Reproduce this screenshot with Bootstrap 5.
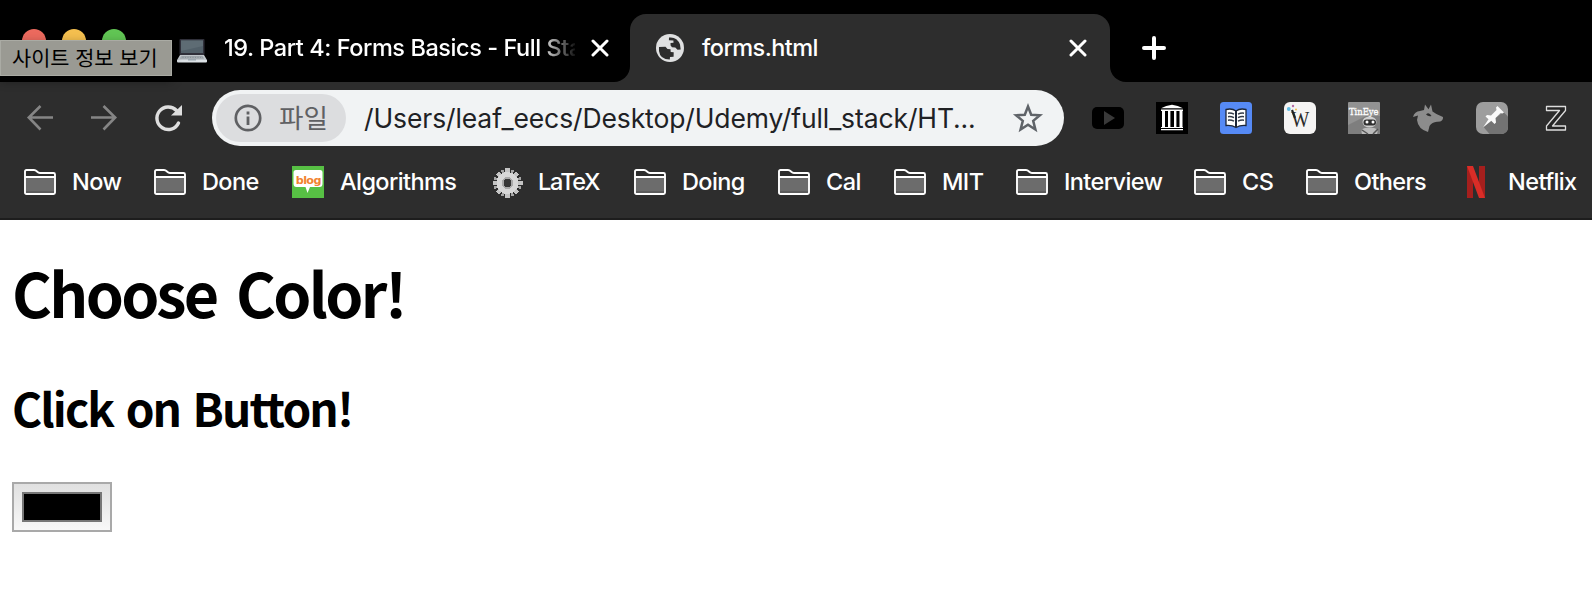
<!DOCTYPE html>
<html lang="ko">
<head>
<meta charset="utf-8">
<meta name="viewport" content="width=device-width, initial-scale=1">
<title>forms.html</title>
<link href="https://cdn.jsdelivr.net/npm/bootstrap@5.3.0/dist/css/bootstrap.min.css" rel="stylesheet">
<style>
body{font-family:Inter,"Noto Sans CJK KR",sans-serif;background:#fff;overflow:hidden}
svg{display:block;flex:none}
.chrome{background:#2d2d2d;color:#fff}
.topgap{height:14px;background:#000}
.tabrow{height:68px;font-size:23.5px;font-weight:500;line-height:68px;white-space:nowrap}
.tab-idle{width:630px;background:#000;border-bottom-right-radius:16px;padding-left:177px}
.tab-live-wrap{width:480px;background:#000}
.tab-live{height:68px;background:#2d2d2d;border-radius:16px 16px 0 0;padding-left:26px}
.tab-rest{background:#000;border-bottom-left-radius:16px;padding-left:32px}
.tab-title{width:351px;margin-left:17px;letter-spacing:-.44px;-webkit-mask-image:linear-gradient(90deg,#000 315px,transparent 354px);mask-image:linear-gradient(90deg,#000 315px,transparent 354px)}
.live-title{width:361px;margin-left:18px;letter-spacing:-.55px}
.toolrow{height:72px;padding-left:24px}
.omni{width:852px;height:56px;margin-left:27px;border-radius:28px;background:#f1f3f4;color:#202124;font-size:26.5px;padding:4px}
.chip{width:130px;height:48px;border-radius:24px;background:#dcdddf;color:#5f6063;padding-left:18px;font-family:"Noto Sans CJK KR",sans-serif;font-size:26.6px}
.chip span{margin-left:17px;padding-bottom:2px}
.url{width:629px;margin-left:18px;padding-top:1px;white-space:nowrap;letter-spacing:-.11px}
.exts{gap:32px;margin-left:28px}
.marks{height:66px;padding:0 0 9px 24px;border-bottom:2px solid #1d1d1d;display:grid;grid-template-columns:130px 138px 200px 142px 144px 116px 122px 178px 112px 154px 132px;align-items:center;font-size:23.5px;font-weight:500;letter-spacing:-.6px;line-height:30px;white-space:nowrap}
.marks>div{display:flex;align-items:center;gap:16px}
.marks .tight{letter-spacing:-1.4px;margin-left:-2px}
.tip{left:0;top:40px;width:172px;height:36px;background:#9a9a93;border:1px solid #aaaba4;color:#000;font-family:"Noto Sans CJK KR",sans-serif;font-size:20.8px;line-height:32px;padding-left:11px;white-space:nowrap;box-shadow:0 4px 10px #0006}
.light{top:29px;width:24px;height:24px;border-radius:50%}
.page{padding:34px 12px;font-family:"Noto Sans CJK KR",sans-serif;color:#000}
.page h1{font-size:61px;font-weight:700;line-height:76px;margin:0;letter-spacing:-2.7px;word-spacing:5px}
.page h2{font-size:46px;font-weight:700;line-height:60px;margin:47px 0 45px;letter-spacing:-1.9px;word-spacing:1.500px;font-variant-ligatures:none}
.picker{display:block;width:100px;height:50px;border:2px solid #a9a9a9;border-radius:0;background:linear-gradient(#e0e0e0,#f8f8f8);padding:8px;appearance:none;-webkit-appearance:none}
.picker::-webkit-color-swatch-wrapper{padding:0}
.picker::-webkit-color-swatch{border:2px solid #777;border-radius:0}
</style>
</head>
<body>
<svg width="0" height="0" class="position-absolute"><defs>
<symbol id="folder" viewBox="0 0 32 26"><path d="M1 8V3q0-2 2-2h9.500l3.500 3.500h13q2 0 2 2V23q0 2-2 2H3q-2 0-2-2z" fill="#2d2d2d"/><path d="M2 9h28v15H2z" fill="#6c6c6c"/><path d="M2 22h28v2H2z" fill="#5c5c5c"/><path d="M1 8h30M1 8V2.500Q1 1 2.500 1H10q1.500 0 3 1.500T16 4H29.500Q31 4 31 5.500V23.500Q31 25 29.500 25H2.500Q1 25 1 23.500z" fill="none" stroke="#fff" stroke-width="1.900"/></symbol>
<symbol id="cross" viewBox="0 0 18 18"><path d="M2 2l14 14M16 2L2 16" stroke="#fff" stroke-width="3" stroke-linecap="round"/></symbol>
</defs></svg>

<header class="chrome position-relative">
  <div class="topgap"></div>
  <div class="tabrow d-flex">
    <div class="tab-idle d-flex align-items-center">
      <svg width="30" height="24" viewBox="0 0 30 24" style="margin-top:6px"><rect x="2.500" width="25" height="16" rx="1" fill="#30303a"/><path d="M4 1.500h22V14H4z" fill="#526069"/><path d="M4 1.500h22V7L4 12z" fill="#5e6c74"/><path d="M3 16h24l3 5H0z" fill="#c0c6cb"/><path d="M4.500 17.200h21l1.500 2.300H3z" fill="#8c949a"/><path d="M4 18.300h22" stroke="#c0c6cb" stroke-width=".6" stroke-dasharray="1.500 1"/><path d="M0 21h30v1.500q0 1-1 1H1q-1 0-1-1z" fill="#dce1e5"/><path d="M11 20h8v1.500h-8z" fill="#9da8b0"/></svg>
      <div class="tab-title">19. Part 4: Forms Basics - Full Sta</div>
      <svg width="18" height="18" style="margin-left:16px"><use href="#cross"/></svg>
    </div>
    <div class="tab-live-wrap">
      <div class="tab-live d-flex align-items-center">
        <svg width="28" height="28" viewBox="0 0 28 28"><circle cx="14" cy="14" r="14" fill="#dfe0e1"/><path d="M3 13l6.500-.3 2 2.300 3 .3.200 2.700 3 .2-.1 4.600-3.600.3-.2 2.500Q4 25.500 3 17zM13 3.500q8-1 11 7l.7 5-3.200.3-2.200-2.300-3.300-.2-1.400-1.700-.1-2.600 3-.3-.1-2.300-4.500-.2z" fill="#2d2d2d"/></svg>
        <div class="live-title">forms.html</div>
        <svg width="18" height="18" style="margin-left:6px"><use href="#cross"/></svg>
      </div>
    </div>
    <div class="tab-rest flex-fill d-flex align-items-center">
      <svg width="24" height="24" viewBox="0 0 24 24"><path d="M12 2v20M2 12h20" stroke="#fff" stroke-width="4" stroke-linecap="round"/></svg>
    </div>
  </div>

  <div class="toolrow d-flex align-items-center">
    <svg width="32" height="32" viewBox="0 0 32 32" fill="none" stroke="#858585" stroke-width="2.600"><path d="M29 15.500H5M16.500 4L4.800 15.500 16.500 27.500"/></svg>
    <svg width="32" height="32" viewBox="0 0 32 32" fill="none" stroke="#858585" stroke-width="2.600" style="margin-left:32px"><path d="M3 15.500h24M15.500 4l11.700 11.500L15.500 27.500"/></svg>
    <svg width="32" height="32" viewBox="0 0 32 32" style="margin-left:33px"><path d="M25.500 21A11.300 11.300 0 1 1 23.500 8.500" fill="none" stroke="#dedede" stroke-width="3.400" stroke-linecap="round"/><path d="M29 3v10.500H18z" fill="#dedede"/></svg>
    <div class="omni d-flex align-items-center">
      <div class="chip d-flex align-items-center">
        <svg width="28" height="28" viewBox="0 0 28 28"><circle cx="14" cy="14" r="12.200" fill="none" stroke="#5f6063" stroke-width="2.700"/><path d="M12.600 12.500h2.800V21h-2.800zM12.600 7.500h2.800v2.900h-2.800z" fill="#5f6063"/></svg>
        <span>파일</span>
      </div>
      <div class="url">/Users/leaf_eecs/Desktop/Udemy/full_stack/HT...</div>
      <svg width="32" height="32" viewBox="0 0 32 32" style="margin-left:19px"><path d="M16 4.500l3.200 8.200 8.700.6-6.700 5.600 2.200 8.600-7.400-4.700-7.400 4.700 2.200-8.600-6.700-5.600 8.700-.6z" fill="none" stroke="#5f6368" stroke-width="2.500"/></svg>
    </div>
    <div class="exts d-flex align-items-center">
      <svg width="32" height="32" viewBox="0 0 32 32"><rect y="5" width="32" height="22" rx="5" fill="#000"/><path d="M12 9v14l11-7z" fill="#393939"/></svg>
      <svg width="32" height="32" viewBox="0 0 32 32"><path d="M0 0h32v32H0z"/><path d="M5 6.200q5-2.700 11-3.400 6 .7 11 3.400zM5 7.400h22v1.700H5zM6 9h3v16H6zm6 0h2.400v16H12zm6 0h2.400v16H18zm5.500 0h3v16h-3zM5 25h22v1H5zm0 2h22v1.300H5z" fill="#fff"/></svg>
      <svg width="32" height="32" viewBox="0 0 32 32"><rect width="32" height="32" rx="3.500" fill="#568af5"/><path d="M6 7.500q6-1.500 10 1.500 4-3 10-1.500v16q-6-.5-10 2-4-2.500-10-2z" fill="#fff" stroke="#1c2638" stroke-width="1.300"/><path d="M16 9v16" stroke="#1c2638" stroke-width="2"/><path d="M8 11.200q3-.5 6 1M8 14.700q3-.5 6 1M8 18.200q3-.5 6 1M24 11.200q-3-.5-6 1M24 14.700q-3-.5-6 1M24 18.200q-3-.5-6 1" fill="none" stroke="#333b48" stroke-width="1.400"/></svg>
      <svg width="32" height="32" viewBox="0 0 32 32"><rect width="32" height="32" rx="6" fill="#f5f4f3"/><text x="16.300" y="25" font-family="Liberation Serif,serif" font-size="24" text-anchor="middle" textLength="18" lengthAdjust="spacingAndGlyphs" fill="#292929">W</text><path d="M8 8l3 8" stroke="#222" stroke-width="2.200"/><circle cx="4.800" cy="7" r="1.900" fill="#61bde5"/><circle cx="9" cy="4" r="1.200" fill="#b66aa5"/><circle cx="12" cy="7.500" r="1" fill="#f1be46"/></svg>
      <svg width="32" height="32" viewBox="0 0 32 32" overflow="visible"><rect width="32" height="32" rx="1" fill="#929292"/><path d="M0 23L18 14h14v18H0z" fill="#7e7e7e"/><text x="1" y="12.500" font-family="DejaVu Serif,serif" font-weight="400" stroke="#fff" stroke-width=".3" font-size="9.500" textLength="29.500" lengthAdjust="spacingAndGlyphs" fill="#fff">TinEye</text><path d="M14 32q-2-5 3-6h9q5 1 3 6z" fill="#bbb"/><ellipse cx="21.500" cy="20" rx="7" ry="5.500" fill="#d0d0d0"/><rect x="15.500" y="17.500" width="12.500" height="6" rx="3" fill="#303030"/><circle cx="19" cy="20" r="1.500" fill="#fff"/><circle cx="25" cy="20" r="1.500" fill="#fff"/><path d="M14 28l6 4M30 27l-5 5" stroke="#555" stroke-width="1.500"/></svg>
      <svg width="32" height="32" viewBox="0 0 32 32"><path d="M12 8l1-5.500 3.500 4.700L19 2.500l1.500 7q4 3.200 10.500 5.500.5 5-6 4.700-5 .5-7.500 4.300L16 30q-10-3-11-12l1-4.500L1 15q1.500-5.500 7-6z" fill="#8c8c8c"/><path d="M14 12.500q3-3 5.500 1.500-3 1-5.500-1.500z" fill="#2d2d2d"/></svg>
      <svg width="32" height="32" viewBox="0 0 32 32"><rect width="32" height="32" rx="7" fill="#9d9d9d"/><path d="M27.500 10L32 14.500V25q0 7-7 7H13.500L7.500 25z" fill="#737373"/><path d="M21.500 4l6.500 6.500-1.500 1-2-.5-5 5 .5 4.500-1.500 1.500-3.300-3.300L7 25.500l5.500-8.200-3-2.800 1.500-1.500 4 .5 5.500-5.500-.5-2.500z" fill="#fafafa"/></svg>
      <svg width="32" height="32" viewBox="0 0 32 32"><path d="M6.500 4.500h19v4L12.500 24h13v4h-19v-4L19.500 8.500h-13z" fill="#252525" stroke="#ddd" stroke-width="1.300" stroke-linejoin="round"/></svg>
    </div>
  </div>

  <nav class="marks">
    <div><svg width="32" height="26"><use href="#folder"/></svg><span>Now</span></div>
    <div><svg width="32" height="26"><use href="#folder"/></svg><span>Done</span></div>
    <div><svg width="32" height="32" viewBox="0 0 32 32"><path d="M0 0h32v32H0z" fill="#57c044"/><path d="M4 4h24q2.500 0 2.500 2.500v11q0 3.500-3 3.500H18l-2.500 6-2-6H4.500q-3 0-3-3.500v-11Q1.500 4 4 4z" fill="#fff"/><text x="3.800" y="18" font-family="DejaVu Sans,sans-serif" font-weight="700" font-size="10.500" textLength="25" lengthAdjust="spacingAndGlyphs" fill="#f28331">blog</text></svg><span>Algorithms</span></div>
    <div><svg width="32" height="32" viewBox="0 0 32 32" shape-rendering="crispEdges"><g stroke="#c4c4c4" stroke-width="4.500"><path d="M15.500 2v30M1 17h30M5.500 7l20 20M25.500 7l-20 20"/><path d="M10 4l11 26M21 4L10 30M2 12l27 10M29 12L2 22" stroke="#a6a6a6" stroke-width="2.500"/></g><circle cx="15.500" cy="17" r="11" fill="#d8d8d8"/><circle cx="15.500" cy="17" r="6" fill="#aaa"/><circle cx="15.500" cy="17" r="4" fill="#383838"/></svg><span class="tight">LaTeX</span></div>
    <div><svg width="32" height="26"><use href="#folder"/></svg><span>Doing</span></div>
    <div><svg width="32" height="26"><use href="#folder"/></svg><span>Cal</span></div>
    <div><svg width="32" height="26"><use href="#folder"/></svg><span>MIT</span></div>
    <div><svg width="32" height="26"><use href="#folder"/></svg><span>Interview</span></div>
    <div><svg width="32" height="26"><use href="#folder"/></svg><span>CS</span></div>
    <div><svg width="32" height="26"><use href="#folder"/></svg><span>Others</span></div>
    <div><svg width="32" height="32" viewBox="0 0 32 32"><path d="M7 0h6v32H7zM19 0h6v32h-6z" fill="#a51f1d"/><path d="M7 0h6l12 32h-6z" fill="#d92d27"/></svg><span>Netflix</span></div>
  </nav>

  <i class="light position-absolute" style="left:22px;background:#eb6a5e"></i>
  <i class="light position-absolute" style="left:62px;background:#f4bf4f"></i>
  <i class="light position-absolute" style="left:102px;background:#61c554"></i>
  <div class="tip position-absolute">사이트 정보 보기</div>
</header>

<main class="page">
  <h1>Choose Color!</h1>
  <h2>Click on Button!</h2>
  <input type="color" class="picker" value="#000000" aria-label="Color">
</main>
<script src="https://cdn.jsdelivr.net/npm/bootstrap@5.3.0/dist/js/bootstrap.bundle.min.js"></script>
</body>
</html>
